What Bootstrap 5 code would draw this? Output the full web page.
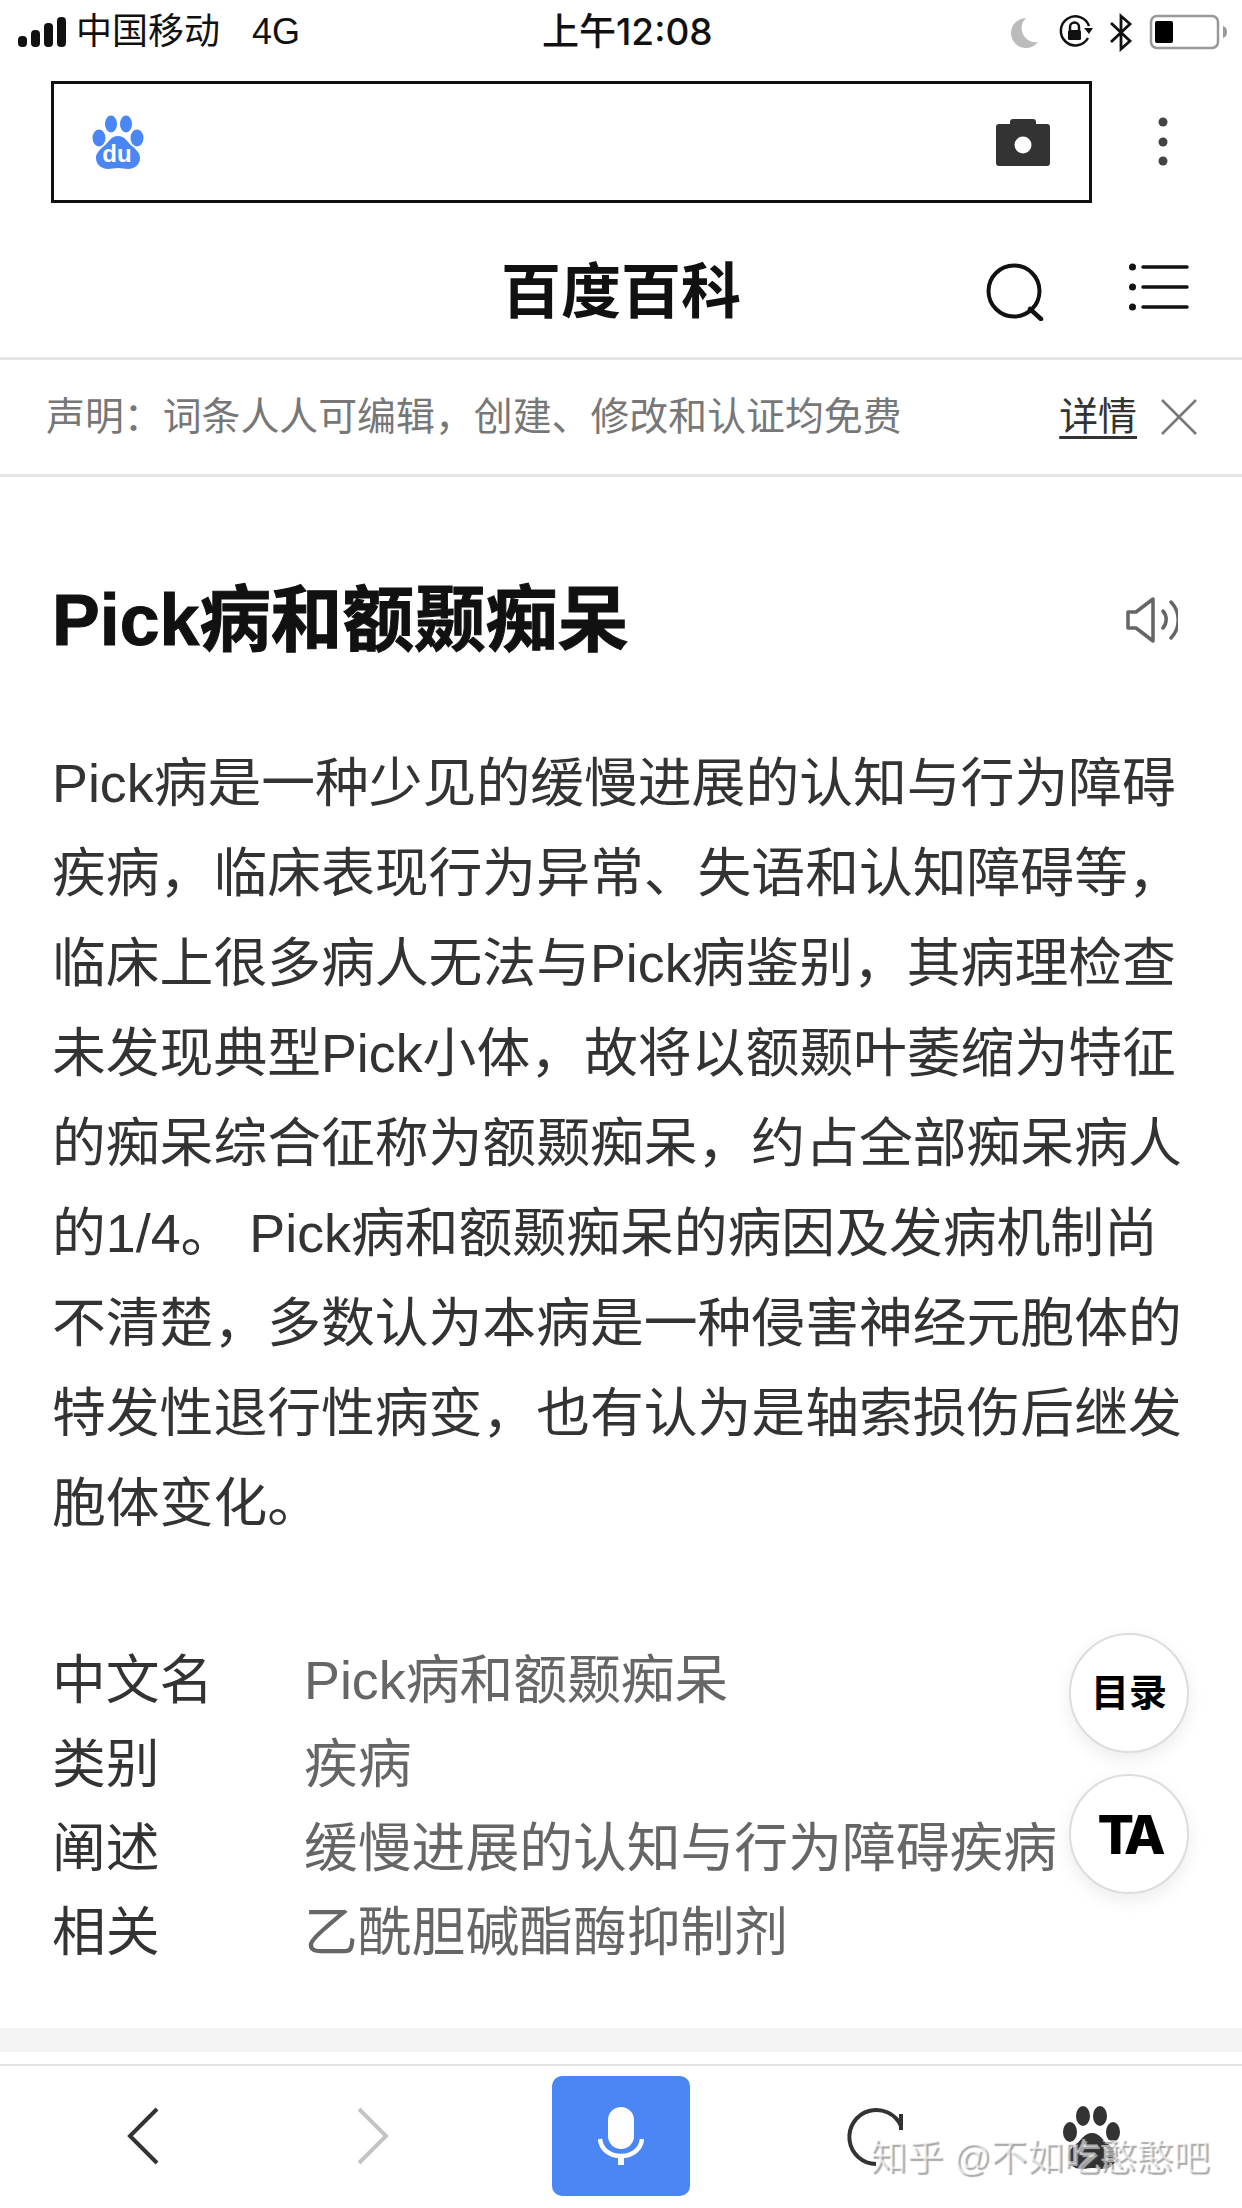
<!DOCTYPE html>
<html lang="zh-CN">
<head>
  <meta charset="UTF-8" />
  <meta name="viewport" content="width=device-width, initial-scale=1.0"/>
  <title>Pick病和额颞痴呆 | 百度百科</title>
  <link href="https://cdn.jsdelivr.net/npm/bootstrap@5.3.0/dist/css/bootstrap.min.css" rel="stylesheet">
  <style>
    body {
      background-color: #fff;
      font-family: "Liberation Sans", "Noto Sans CJK SC", sans-serif;
      color: #333;
    }
    .phone-page {
      position: relative;
      width: 1242px;
      height: 2208px;
      overflow: hidden;
    }
    .status-bar {
      height: 60px;
      padding: 4px 12px 0 18px;
      color: #111;
      font-size: 36px;
    }
    .status-left { width: 524px; }
    .status-carrier { margin-left: 10px; }
    .status-net { margin-left: 32px; }
    .status-time {
      font-family: Inter, "Noto Sans CJK SC", sans-serif;
      font-size: 37px;
      font-weight: 500;
    }
    .search-row {
      padding: 21px 0 0 51px;
      height: 143px;
    }
    .search-box {
      width: 1041px;
      height: 122px;
      border: 3px solid #111;
      padding: 0 39px 0 38px;
    }
    .kebab { margin-left: 66px; }
    .title-bar {
      height: 157px;
      padding-top: 25px;
      border-bottom: 3px solid #e5e5e5;
      position: relative;
    }
    .site-name {
      font-size: 60px;
      font-weight: 700;
      color: #111;
      margin: 0;
    }
    .title-icons {
      position: absolute;
      right: 53px;
      top: 60px;
    }
    .list-icon { margin-left: 85px; }
    .notice-bar {
      height: 117px;
      padding: 0 45px 0 46px;
      border-bottom: 3px solid #e5e5e5;
      font-size: 38.9px;
      color: #777;
    }
    .notice-link {
      color: #333;
      text-decoration: underline;
      text-underline-offset: 6px;
    }
    .entry {
      padding: 0 40px 0 52px;
    }
    .entry-head {
      padding: 98px 0 0;
      height: 261px;
    }
    .entry-title {
      font-size: 71.600px;
      font-weight: 700;
      -webkit-text-stroke: 1px #111;
      color: #111;
      margin: 0;
      line-height: 90px;
    }
    .speaker-icon { margin: 22px 24px 0 0; }
    .entry-text {
      font-size: 53.800px;
      line-height: 90px;
      margin: 0;
      height: 810px;
      width: 1150px;
    }
    .info-list {
      margin: 0;
      padding-top: 90px;
      font-size: 53.800px;
      line-height: 84px;
    }
    .info-name {
      width: 252px;
      color: #333;
      font-weight: 400;
    }
    .info-value {
      color: #666;
      margin: 0;
    }
    .float-btn {
      position: absolute;
      left: 1069px;
      width: 120px;
      height: 120px;
      border-radius: 50%;
      background: #fff;
      border: 2px solid #ddd;
      box-shadow: 0 6px 18px rgba(0,0,0,.08);
      color: #000;
      font-weight: 700;
    }
    .float-toc { top: 1633px; font-size: 38px; }
    .float-ta {
      top: 1774px;
      font-size: 54px;
      letter-spacing: -5px;
      font-family: Inter, "Liberation Sans", sans-serif;
      font-weight: 800;
    }
    .gray-band {
      position: absolute;
      left: 0;
      right: 0;
      top: 2028px;
      height: 24px;
      background: #f4f4f4;
    }
    .bottom-bar {
      position: absolute;
      left: 0;
      right: 0;
      top: 2064px;
      height: 144px;
      border-top: 2px solid #e3e3e3;
    }
    .mic-btn {
      position: absolute;
      left: 552px;
      top: 10px;
      width: 138px;
      height: 120px;
      background: #4b86f5;
      border-radius: 10px;
      border: 0;
    }
    .bar-icon { position: absolute; top: 40px; }
    .icon-back { left: 126px; }
    .icon-forward { left: 356px; }
    .icon-reload { left: 846px; }
    .icon-paw { left: 1062px; }
    .watermark {
      position: absolute;
      left: 870px;
      top: 2133px;
      font-size: 36.500px;
      line-height: 50px;
      color: rgba(255,255,255,.6);
      text-shadow: 2px 2px 1px #aaa;
      white-space: nowrap;
    }
  </style>
</head>
<body>
  <div class="phone-page">

    <!-- Status bar -->
    <div class="status-bar d-flex align-items-center">
      <div class="status-left d-flex align-items-center">
        <svg width="48" height="30" viewBox="0 0 48 30">
          <rect x="0" y="19" width="9" height="11" rx="4" fill="#111"/>
          <rect x="13" y="13" width="9" height="17" rx="4" fill="#111"/>
          <rect x="26" y="6" width="9" height="24" rx="4" fill="#111"/>
          <rect x="39" y="0" width="9" height="30" rx="4" fill="#111"/>
        </svg>
        <span class="status-carrier">中国移动</span>
        <span class="status-net">4G</span>
      </div>
      <span class="status-time">上午12:08</span>
      <div class="ms-auto d-flex align-items-center">
        <svg width="230" height="40" viewBox="1000 10 230 40">
          <path d="M1026 16a15 15 0 1 0 12 24a14 14 0 0 1-12-24z" fill="#bbb"/>
          <path d="M1088 36a14.500 14.500 0 1 1 1-12" fill="none" stroke="#111" stroke-width="2.500"/>
          <path d="M1084 26h9l-4 6z" fill="#111"/>
          <rect x="1068" y="28" width="13" height="10" rx="1.500" fill="#111"/>
          <path d="M1070 28v-3a4.500 4.500 0 0 1 9 0v3" fill="none" stroke="#111" stroke-width="2.500"/>
          <path d="M1111 21l19 18-9 8V14l9 8-19 18" fill="none" stroke="#111" stroke-width="2.800"/>
          <rect x="1151" y="14" width="67" height="32" rx="6" fill="none" stroke="#999" stroke-width="2.500"/>
          <rect x="1155" y="19" width="18" height="22" rx="2" fill="#000"/>
          <path d="M1223 24c3 1 4 3 4 6s-1 5-4 6z" fill="#999"/>
        </svg>
      </div>
    </div>

    <!-- Search box -->
    <div class="search-row d-flex align-items-start">
      <div class="search-box d-flex align-items-center justify-content-between">
        <svg width="52" height="54" viewBox="0 0 52 54">
          <g fill="#4b86f5">
            <ellipse cx="7" cy="23" rx="6.500" ry="8.500"/>
            <ellipse cx="19" cy="9" rx="6" ry="8.500"/>
            <ellipse cx="34" cy="9" rx="6" ry="8.500"/>
            <ellipse cx="45" cy="23" rx="6.500" ry="8.500"/>
            <path d="M26 21c7 0 9 6 14 10 6 5 8 8 8 12 0 7-6 11-12 11-4 0-6-1-10-1s-6 1-10 1c-6 0-12-4-12-11 0-4 2-7 8-12 5-4 7-10 14-10z"/>
          </g>
          <text x="25" y="47" text-anchor="middle" font-family="Liberation Sans" font-weight="700" font-size="24" fill="#fff">du</text>
        </svg>
        <svg width="54" height="47" viewBox="0 0 54 47">
          <path d="M3 5h11V3a3 3 0 0 1 3-3h20a3 3 0 0 1 3 3v2h11a3 3 0 0 1 3 3v36a3 3 0 0 1-3 3H3a3 3 0 0 1-3-3V8a3 3 0 0 1 3-3z" fill="#333"/>
          <ellipse cx="27" cy="26" rx="8.500" ry="8.500" fill="#fff"/>
        </svg>
      </div>
      <svg class="kebab align-self-center" width="10" height="50" viewBox="0 0 10 50">
        <circle cx="5" cy="5" r="4.500" fill="#444"/>
        <circle cx="5" cy="25" r="4.500" fill="#444"/>
        <circle cx="5" cy="44" r="4.500" fill="#444"/>
      </svg>
    </div>

    <!-- Site title -->
    <div class="title-bar d-flex align-items-center justify-content-center">
      <h1 class="site-name">百度百科</h1>
      <div class="title-icons d-flex align-items-start">
        <svg width="58" height="58" viewBox="0 0 58 58">
          <circle cx="28" cy="28" r="25.500" fill="none" stroke="#111" stroke-width="4"/>
          <path d="M44 46l11 10" stroke="#111" stroke-width="4.500" stroke-linecap="round"/>
        </svg>
        <svg class="list-icon" width="60" height="48" viewBox="0 0 60 48">
          <g fill="#111">
            <circle cx="3.500" cy="4" r="3.500"/>
            <circle cx="3.500" cy="24" r="3.500"/>
            <circle cx="3.500" cy="44" r="3.500"/>
          </g>
          <g stroke="#111" stroke-width="3.500" stroke-linecap="round">
            <path d="M14 4h44M14 24h44M14 44h44"/>
          </g>
        </svg>
      </div>
    </div>

    <!-- Notice -->
    <div class="notice-bar d-flex align-items-center">
      <span>声明：词条人人可编辑，创建、修改和认证均免费</span>
      <span class="notice-link ms-auto">详情</span>
      <svg class="ms-4" width="36" height="36" viewBox="0 0 36 36">
        <path d="M1 1l34 34M35 1L1 35" stroke="#777" stroke-width="2.500"/>
      </svg>
    </div>

    <!-- Entry -->
    <div class="entry">
      <div class="entry-head d-flex justify-content-between align-items-start">
        <h2 class="entry-title">Pick病和额颞痴呆</h2>
        <svg class="speaker-icon" width="52" height="46" viewBox="0 0 52 46">
          <path d="M2 15h8L27 2v42L10 31H2z" fill="none" stroke="#666" stroke-width="3.500" stroke-linejoin="round"/>
          <path d="M37 14a13 13 0 0 1 0 17M45 5a26 26 0 0 1 0 36" fill="none" stroke="#666" stroke-width="3.500" stroke-linecap="round"/>
        </svg>
      </div>
      <p class="entry-text">Pick病是一种少见的缓慢进展的认知与行为障碍疾病，临床表现行为异常、失语和认知障碍等，临床上很多病人无法与Pick病鉴别，其病理检查未发现典型Pick小体，故将以额颞叶萎缩为特征的痴呆综合征称为额颞痴呆，约占全部痴呆病人的1/4。 Pick病和额颞痴呆的病因及发病机制尚不清楚，多数认为本病是一种侵害神经元胞体的特发性退行性病变，也有认为是轴索损伤后继发胞体变化。</p>
      <dl class="info-list">
        <div class="d-flex"><dt class="info-name">中文名</dt><dd class="info-value">Pick病和额颞痴呆</dd></div>
        <div class="d-flex"><dt class="info-name">类别</dt><dd class="info-value">疾病</dd></div>
        <div class="d-flex"><dt class="info-name">阐述</dt><dd class="info-value">缓慢进展的认知与行为障碍疾病</dd></div>
        <div class="d-flex"><dt class="info-name">相关</dt><dd class="info-value">乙酰胆碱酯酶抑制剂</dd></div>
      </dl>
    </div>

    <!-- Floating buttons -->
    <button class="float-btn float-toc d-flex align-items-center justify-content-center p-0">目录</button>
    <button class="float-btn float-ta d-flex align-items-center justify-content-center p-0">TA</button>

    <div class="gray-band"></div>

    <!-- Bottom toolbar -->
    <div class="bottom-bar">
      <svg class="bar-icon icon-back" width="34" height="60" viewBox="0 0 34 60">
        <path d="M31 3L4 30l27 27" fill="none" stroke="#333" stroke-width="4"/>
      </svg>
      <svg class="bar-icon icon-forward" width="34" height="60" viewBox="0 0 34 60">
        <path d="M3 3l27 27L3 57" fill="none" stroke="#c4c4c4" stroke-width="4"/>
      </svg>
      <button class="mic-btn d-flex align-items-center justify-content-center p-0">
        <svg width="46" height="58" viewBox="0 0 46 58">
          <rect x="10" y="0" width="26" height="42" rx="13" fill="#fff"/>
          <path d="M2 32c1 10 9 17 21 17s20-7 21-17" fill="none" stroke="#fff" stroke-width="4.500"/>
          <rect x="20" y="48" width="6" height="10" fill="#fff"/>
        </svg>
      </button>
      <svg class="bar-icon icon-reload" width="60" height="62" viewBox="0 0 60 62">
        <path d="M55 20A27 27 0 1 0 30 58" fill="none" stroke="#333" stroke-width="4"/>
        <path d="M55 8v16" stroke="#333" stroke-width="4"/>
      </svg>
      <svg class="bar-icon icon-paw" width="60" height="66" viewBox="0 0 60 66">
        <g fill="#333">
          <ellipse cx="8" cy="26" rx="7" ry="10"/>
          <ellipse cx="21" cy="10" rx="7" ry="10"/>
          <ellipse cx="38" cy="10" rx="7" ry="10"/>
          <ellipse cx="51" cy="26" rx="7" ry="10"/>
          <path d="M30 27c8 0 10 7 16 11 6 5 8 9 8 13 0 8-7 12-13 12-5 0-7-1-11-1s-6 1-11 1c-6 0-13-4-13-12 0-4 2-8 8-13 6-4 8-11 16-11z"/>
        </g>
      </svg>
    </div>

    <div class="watermark">知乎 @不如吃憨憨吧</div>
  </div>

  <script src="https://cdn.jsdelivr.net/npm/bootstrap@5.3.0/dist/js/bootstrap.bundle.min.js"></script>
</body>
</html>
